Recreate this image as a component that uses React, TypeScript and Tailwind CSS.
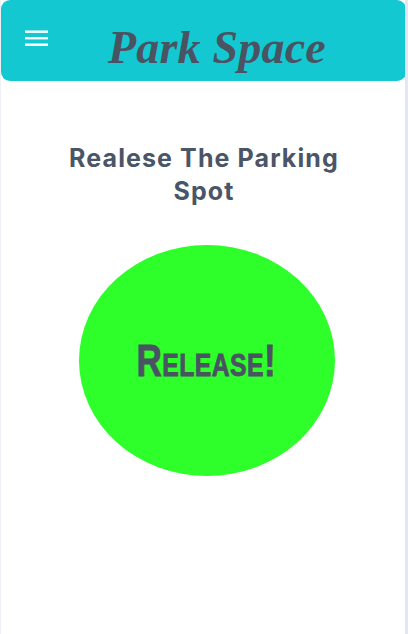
export default function App() {
  return (
    <div className="flex h-[634px] w-[408px] flex-col overflow-hidden border-l border-r-[3px] border-l-[#eef0f6] border-r-[#e4e6f2] bg-white">
      <header className="flex h-[81px] w-[405px] shrink-0 items-start rounded-[9px] bg-[#14c8d2]">
        <svg className="ml-6 mt-[30px] shrink-0" width="23" height="17" viewBox="0 0 23 17" fill="#ffffff">
          <rect x="0" y="0.5" width="23" height="2.4" />
          <rect x="0" y="7" width="23" height="2.4" />
          <rect x="0" y="13.5" width="23" height="2.4" />
        </svg>
        <h1 className="ml-[60px] mt-[18px] font-['Liberation_Serif',serif] text-[46px] font-bold italic leading-[60px] tracking-[0.2px] text-[#4a5362]">
          Park Space
        </h1>
      </header>
      <main className="flex flex-col items-center">
        <h2 className="ml-[2px] mt-[61px] w-[290px] text-center font-['Inter',sans-serif] text-[25px] font-bold leading-[33px] tracking-[1.1px] text-[#4a5568]">
          Realese The Parking Spot
        </h2>
        <button className="ml-[7px] mt-[37px] flex h-[231px] w-[256px] items-center justify-center rounded-[50%] bg-[#2eff2b]">
          <span className="inline-block scale-x-[0.8] font-['Liberation_Sans',sans-serif] text-[44px] font-bold leading-none tracking-[0.5px] text-[#4a5362] [-webkit-text-stroke:0.8px_#4a5362] [font-variant:small-caps]">
            Release!
          </span>
        </button>
      </main>
    </div>
  );
}
